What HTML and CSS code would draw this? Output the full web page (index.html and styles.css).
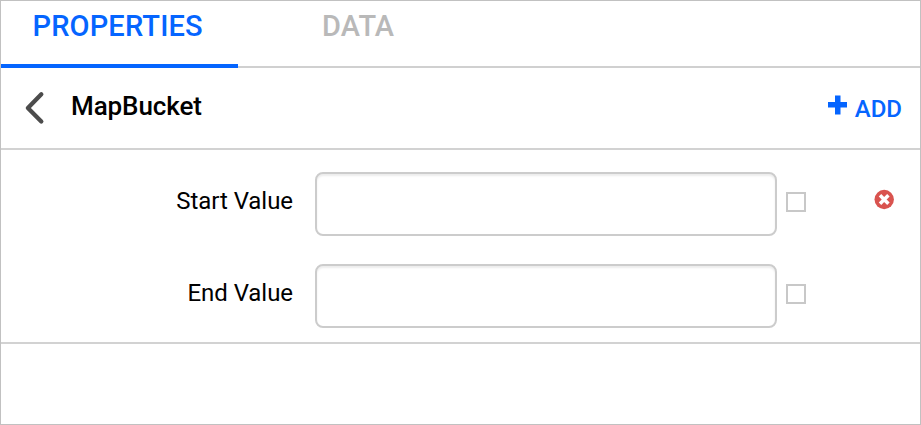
FILE: index.html
```html
<!DOCTYPE html>
<html lang="en">
<head>
<meta charset="utf-8">
<title>MapBucket properties</title>
<link rel="stylesheet" href="styles.css">
</head>
<body>
<main class="panel">
  <nav class="tabs">
    <a class="tab tab-active">PROPERTIES</a>
    <a class="tab">DATA</a>
  </nav>
  <header class="header">
    <svg class="back" viewBox="0 0 22 34" width="22" height="34"><path d="M17.300 3.300 3.900 17l13.400 13.500"/></svg>
    <h1 class="title">MapBucket</h1>
    <button class="add"><svg class="plus" viewBox="0 0 20 20" width="20" height="20"><path d="M7 .500h5.500v6.500H19v5.500h-6.500V19.500H7v-7H0V7h7z"/></svg><span>ADD</span></button>
  </header>
  <section class="bucket">
    <div class="row">
      <label class="label" for="start">Start Value</label>
      <input class="field" id="start" type="text">
      <span class="check"></span>
      <svg class="remove" viewBox="0 0 20 20" width="20" height="20"><circle cx="10.200" cy="9.500" r="9.700"/><path d="m6 5.300 8.400 8.400m0-8.400L6 13.700"/></svg>
    </div>
    <div class="row">
      <label class="label" for="end">End Value</label>
      <input class="field" id="end" type="text">
      <span class="check"></span>
    </div>
  </section>
</main>
</body>
</html>
```
FILE: styles.css
```css
* { box-sizing: border-box; }
body { margin: 0; background: #fff; color: #000; font-family: Roboto, sans-serif; }
.panel { height: 425px; border: 1px solid #c1c1c1; }
.tabs { display: flex; height: 67px; border-bottom: 2px solid #d0d0d0; }
.tab { width: 237px; height: 67px; padding: 8px 0 0 84px; font-size: 29px; line-height: 34px; font-weight: 500; letter-spacing: 0.15px; color: #b9b9b9; }
.tab-active { padding-left: 31.5px; color: #0565ff; border-bottom: 4px solid #0565ff; }
.header { display: flex; height: 82px; border-bottom: 2px solid #d2d2d2; padding: 0 18px 0 23px; }
.back { margin-top: 23px; fill: none; stroke: #4c4c4c; stroke-width: 4.3; stroke-linecap: round; stroke-linejoin: round; }
.title { margin: 22px 0 0 25px; font-size: 26px; line-height: 32px; font-weight: 500; letter-spacing: -0.1px; }
.add { display: flex; gap: 7px; margin: 25px 0 0 auto; padding: 0; border: 0; background: none; color: #0565ff; font: 500 24px/32px Roboto, sans-serif; height: 32px; }
.plus { margin-top: 2px; fill: #0565ff; }
.bucket { display: flex; flex-direction: column; gap: 28px; height: 194px; padding-top: 22px; border-bottom: 2px solid #d2d2d2; }
.row { display: flex; height: 64px; }
.label { width: 292px; margin-right: 22px; padding-top: 13px; text-align: right; font-size: 24px; line-height: 32px; letter-spacing: -0.05px; }
.field { width: 462px; height: 64px; border: 2px solid #ccc; border-radius: 8px; box-shadow: inset 0 2px 2px #00000013; background: #fff; padding: 6px 12px; font: 24px Roboto, sans-serif; }
.check { width: 20px; height: 20px; margin: 20px 0 0 9px; border: 2px solid #c8c8c8; }
.remove { margin: 18px 0 0 68px; fill: #d9534f; overflow: visible; }
.remove path { stroke: #fff; stroke-width: 3.5; }
```
